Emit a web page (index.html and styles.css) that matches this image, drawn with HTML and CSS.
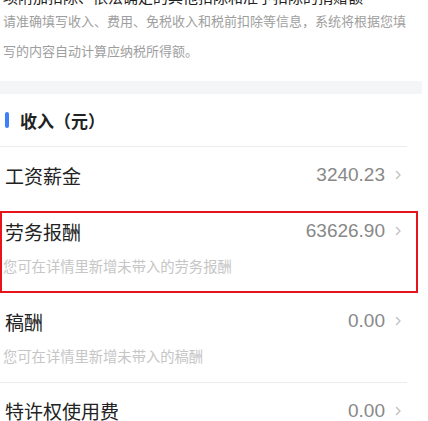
FILE: index.html
```html
<!DOCTYPE html>
<html lang="zh-CN">
<head>
<meta charset="utf-8">
<link rel="stylesheet" href="styles.css">
</head>
<body>
<div class="page">
  <p class="clipped">项附加扣除、依法确定的其他扣除和准予扣除的捐赠额</p>
  <p class="desc">请准确填写收入、费用、免税收入和税前扣除等信息，系统将根据您填写的内容自动计算应纳税所得额。</p>
  <div class="band"></div>
  <div class="list">
    <div class="section-title"><span class="bar"></span><span>收入（元）</span></div>
    <div class="item noline">
      <div class="row"><span class="label">工资薪金</span><span class="value">3240.23</span><svg class="chev" width="7" height="10" viewBox="0 0 7 10"><polyline points="1.5,1.5 5,5 1.5,8.5" fill="none" stroke="#c4c4c4" stroke-width="1.5" stroke-linecap="round" stroke-linejoin="round"/></svg></div>
    </div>
    <div class="item hinted highlight">
      <div class="row"><span class="label">劳务报酬</span><span class="value">63626.90</span><svg class="chev" width="7" height="10" viewBox="0 0 7 10"><polyline points="1.5,1.5 5,5 1.5,8.5" fill="none" stroke="#c4c4c4" stroke-width="1.5" stroke-linecap="round" stroke-linejoin="round"/></svg></div>
      <div class="hint">您可在详情里新增未带入的劳务报酬</div>
    </div>
    <div class="item hinted">
      <div class="row"><span class="label">稿酬</span><span class="value">0.00</span><svg class="chev" width="7" height="10" viewBox="0 0 7 10"><polyline points="1.5,1.5 5,5 1.5,8.5" fill="none" stroke="#c4c4c4" stroke-width="1.5" stroke-linecap="round" stroke-linejoin="round"/></svg></div>
      <div class="hint">您可在详情里新增未带入的稿酬</div>
    </div>
    <div class="item">
      <div class="row"><span class="label">特许权使用费</span><span class="value">0.00</span><svg class="chev" width="7" height="10" viewBox="0 0 7 10"><polyline points="1.5,1.5 5,5 1.5,8.5" fill="none" stroke="#c4c4c4" stroke-width="1.5" stroke-linecap="round" stroke-linejoin="round"/></svg></div>
    </div>
  </div>
</div>
</body>
</html>
```
FILE: styles.css
```css
html, body {
  margin: 0;
  padding: 0;
  background: #ffffff;
  overflow: hidden;
}
body {
  font-family: "Liberation Sans", "Noto Sans CJK SC", sans-serif;
  color: #222222;
}
.page {
  width: 428px;
  height: 421px;
  overflow: hidden;
}
.clipped {
  margin: -10px 0 0 0;
  padding: 0 0 0 3px;
  font-size: 15px;
  line-height: 16px;
  height: 16px;
  color: #222222;
  white-space: nowrap;
  overflow: hidden;
}
.desc {
  margin: 0;
  padding: 0 10px 0 3px;
  font-family: "Noto Sans CJK SC", sans-serif;
  font-size: 13px;
  line-height: 30px;
  color: #9e9e9e;
}
.band {
  margin-top: 15px;
  width: 422px;
  height: 13px;
  background: #f4f5f7;
}
.list {
  width: 407px;
}
.section-title {
  height: 53px;
  display: flex;
  align-items: center;
  gap: 11px;
  padding-left: 5px;
  font-size: 17px;
  font-weight: 700;
  color: #222222;
  border-bottom: 1px solid #ececec;
  box-sizing: border-box;
}
.bar {
  width: 4px;
  height: 16px;
  border-radius: 2px;
  background: #3d7ff6;
}
.item {
  position: relative;
  border-bottom: 1px solid #ececec;
}
.item.noline {
  border-bottom: none;
}
.row {
  height: 55px;
  display: flex;
  align-items: center;
  padding: 0 5px 0 5px;
}
.noline .row {
  height: 56px;
}
.label {
  flex: 1;
  font-size: 19px;
  color: #222222;
}
.value {
  font-size: 19px;
  color: #888888;
}
.chev {
  margin-left: 10px;
  display: block;
}
.hinted .row {
  height: 56px;
}
.hint {
  padding: 0 0 17px 3px;
  font-size: 14.3px;
  line-height: 16px;
  color: #c6c6c6;
}
.highlight::after {
  content: "";
  position: absolute;
  left: 0;
  top: 8px;
  width: 418px;
  bottom: -1px;
  border: 2px solid #e8141b;
  box-sizing: border-box;
  pointer-events: none;
}
```
